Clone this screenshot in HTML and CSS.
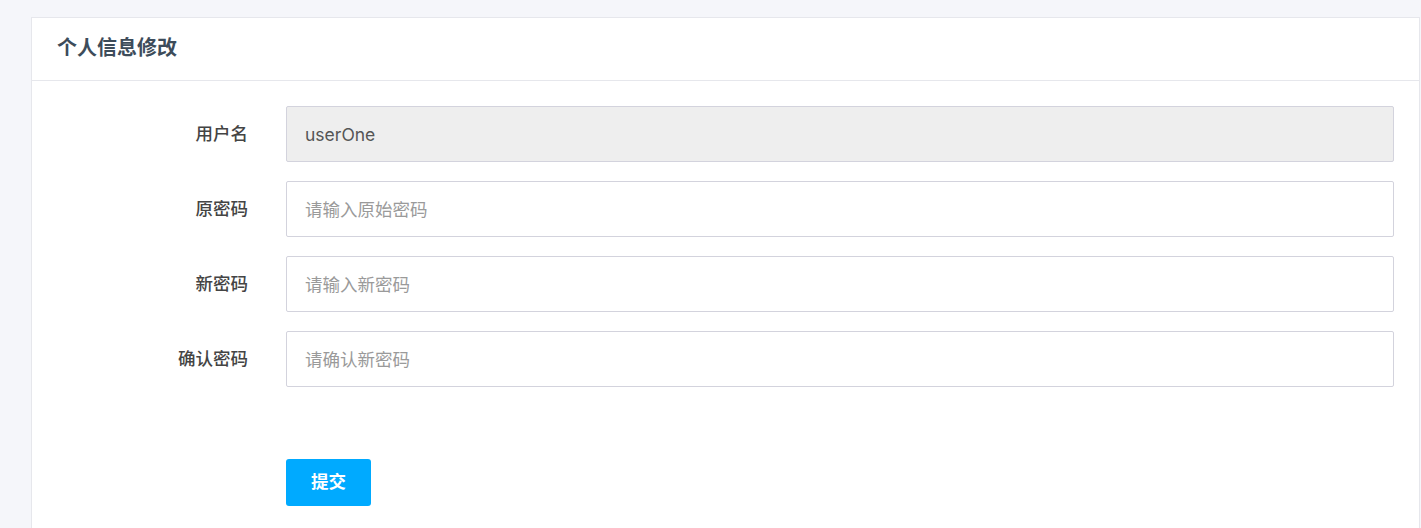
FILE: index.html
```html
<!DOCTYPE html>
<html lang="zh-CN">
<head>
<meta charset="utf-8">
<title>个人信息修改</title>
<link rel="stylesheet" href="styles.css">
</head>
<body>
<div class="page">
  <section class="card">
    <header class="card-header">
      <h2 class="card-title">个人信息修改</h2>
    </header>
    <div class="card-body">
      <form class="form">
        <label class="form-label">用户名</label>
        <input class="form-input is-readonly" type="text" value="userOne" readonly>
        <label class="form-label">原密码</label>
        <input class="form-input" type="password" placeholder="请输入原始密码">
        <label class="form-label">新密码</label>
        <input class="form-input" type="password" placeholder="请输入新密码">
        <label class="form-label">确认密码</label>
        <input class="form-input" type="password" placeholder="请确认新密码">
        <div class="form-actions">
          <button class="btn-submit" type="button">提交</button>
        </div>
      </form>
    </div>
  </section>
</div>
</body>
</html>
```
FILE: styles.css
```css
* { box-sizing: border-box; }
html, body {
  margin: 0;
  padding: 0;
  background: #f5f6fa;
  font-family: "Inter", "Noto Sans CJK SC", sans-serif;
}
.page {
  padding: 17px 1px 0 31px;
  height: 528px;
  overflow: hidden;
}
.card {
  background: #fff;
  border: 1px solid #e6e7ec;
  border-bottom: none;
  min-height: 520px;
}
.card-header {
  height: 63px;
  border-bottom: 1px solid #e6e7ec;
  display: flex;
  align-items: center;
  padding: 0 25px 5px 25px;
}
.card-title {
  margin: 0;
  font-size: 20px;
  font-weight: 700;
  color: #3d4c5a;
  font-family: "Noto Sans CJK SC", sans-serif;
}
.card-body {
  padding: 25px 25px 0 25px;
}
.form {
  display: grid;
  grid-template-columns: 191px 1fr;
  column-gap: 38px;
  row-gap: 19px;
  align-items: center;
}
.form-label {
  text-align: right;
  font-size: 17.5px;
  color: #444;
  font-weight: 500;
  padding-bottom: 3px;
  font-family: "Noto Sans CJK SC", sans-serif;
}
.form-input {
  height: 56px;
  width: 100%;
  border: 1px solid #d3d3dd;
  border-radius: 2px;
  padding: 0 18px;
  font-size: 17.5px;
  color: #555;
  background: #fff;
  font-family: "Inter", "Noto Sans CJK SC", sans-serif;
  outline: none;
}
.form-input::placeholder {
  color: #9a9a9a;
  font-family: "Noto Sans CJK SC", sans-serif;
}
.form-input.is-readonly {
  background: #eeeeee;
}
.form-actions {
  grid-column: 2;
  margin-top: 53px;
}
.btn-submit {
  width: 85px;
  height: 47px;
  border: none;
  border-radius: 3px;
  background: #00aaff;
  color: #fff;
  font-size: 17.5px;
  font-weight: 700;
  padding: 0 0 4px 0;
  font-family: "Noto Sans CJK SC", sans-serif;
  cursor: pointer;
}
```
